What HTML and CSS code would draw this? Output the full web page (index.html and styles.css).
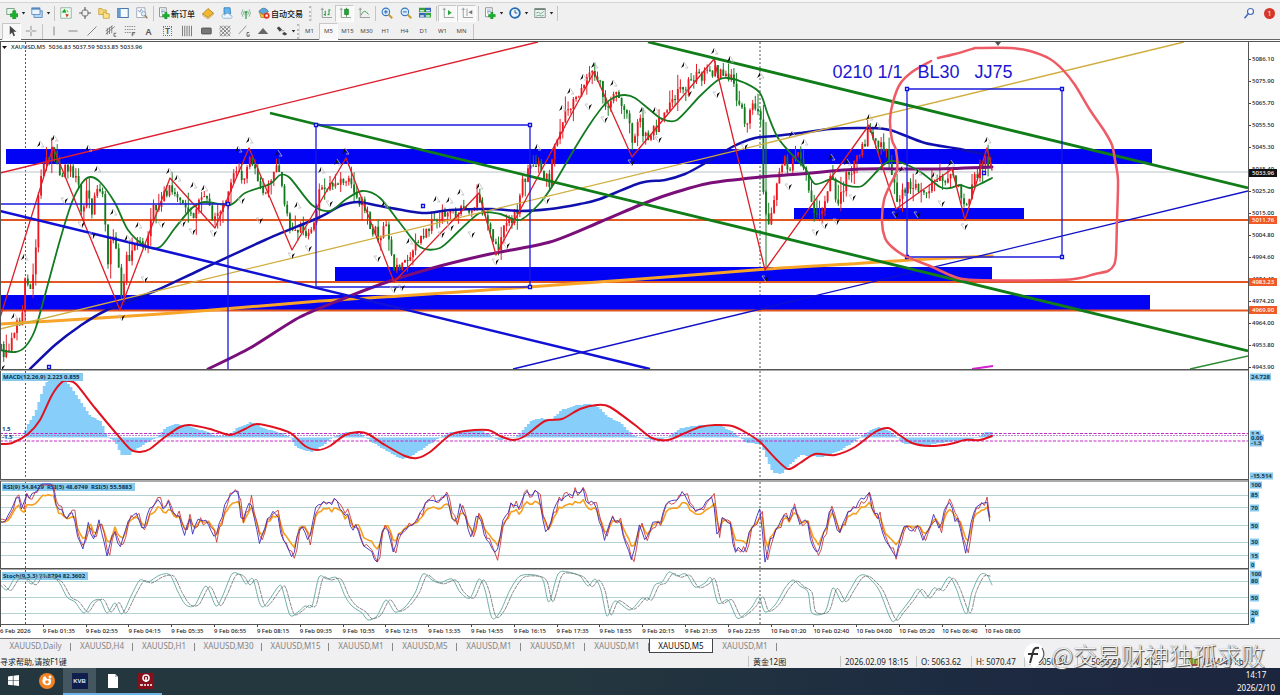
FILE: index.html
```html
<!DOCTYPE html>
<html lang="en">
<head>
<meta charset="utf-8">
<title>XAUUSD,M5</title>
<link rel="stylesheet" href="styles.css">
</head>
<body>
<svg class="sprite" aria-hidden="true">
  <symbol id="plus" viewBox="0 0 16 16"><path d="M1 2h10v8H1z" fill="#e8f5e8" stroke="#5a8f6a"/><path d="M9 5h4v4h3v4h-3v3H9v-3H6V9h3z" fill="#18b428" stroke="#0a7a18" stroke-width=".7"/></symbol>
  <symbol id="profiles" viewBox="0 0 16 16"><path d="M4 5h11v9H4z" fill="#b9d6f2" stroke="#4a7db5"/><path d="M1 1h11v9H1z" fill="#eaf4ff" stroke="#4a7db5"/><path d="M1 2.500h11" stroke="#4a7db5" stroke-width="2"/></symbol>
  <symbol id="market" viewBox="0 0 16 16"><path d="M1 1h14v14H1z" fill="#f3fbf3" stroke="#7aa889"/><path d="M3 7l3-4 2 4zM9 4l2 3" fill="#1ca52c" stroke="#1ca52c"/><path d="M7 9l5 1-3 4z" fill="#d9442c"/></symbol>
  <symbol id="target" viewBox="0 0 16 16"><circle cx="8" cy="8" r="4.500" fill="none" stroke="#777" stroke-width="1.300"/><path d="M8 0v5M8 11v5M0 8h5M11 8h5" stroke="#666" stroke-width="1.600"/></symbol>
  <symbol id="navigator" viewBox="0 0 16 16"><path d="M1 2h4l1 2h5v6H1z" fill="#f6d978" stroke="#c39524"/><path d="M7 7h3l1 2h4v6H7z" fill="#ffe48e" stroke="#c39524"/></symbol>
  <symbol id="terminal" viewBox="0 0 16 16"><path d="M1 2h14v12H1z" fill="#f5faff" stroke="#4b78ac" stroke-width="1.400"/><path d="M1 2h4v12H1z" fill="#6a9bd0"/></symbol>
  <symbol id="tester" viewBox="0 0 16 16"><path d="M1 1h11v13H1z" fill="#fff" stroke="#8796a8"/><path d="M3 4l2 3 2-4 2 3" fill="none" stroke="#5683b9"/><circle cx="10" cy="9" r="3" fill="#dceeff" stroke="#7990aa"/><path d="M12 11l3 4" stroke="#9b8347" stroke-width="2"/></symbol>
  <symbol id="order" viewBox="0 0 16 16"><path d="M2 1h9v12H2z" fill="#fff" stroke="#777"/><path d="M4 4h5M4 6h5M4 8h3" stroke="#6f93b5"/><path d="M9 7h3v3h3v3h-3v3H9v-3H6v-3h3z" fill="#17b62a" stroke="#0b7a19" stroke-width=".6"/></symbol>
  <symbol id="editor" viewBox="0 0 16 16"><path d="M1 9l7-7 7 6-7 6z" fill="#f2b82e" stroke="#ad7610"/><path d="M1 9v2l7 5 7-6V8l-7 6z" fill="#fff0b8" stroke="#ad7610" stroke-width=".8"/></symbol>
  <symbol id="cloud" viewBox="0 0 16 16"><path d="M4 1h8l1 8H4z" fill="#63b5ee" stroke="#2775b2"/><path d="M2 14c-3-5 3-5 3-3 2-5 7-2 7 0 4 0 3 4 1 4H3z" fill="#eaf5ff" stroke="#7da5c5"/></symbol>
  <symbol id="signal" viewBox="0 0 16 16"><path d="M4 3q-4 5 0 10M12 3q4 5 0 10M6 5q-3 3 0 6M10 5q3 3 0 6" fill="none" stroke="#8db69c" stroke-width="1.300"/><path d="M8 7v9" stroke="#38a74b" stroke-width="1.800"/><circle cx="8" cy="7" r="1.800" fill="#38a74b"/></symbol>
  <symbol id="auto" viewBox="0 0 16 16"><path d="M1 6q7-9 13 0l-6 5z" fill="#5da7dc" stroke="#33739e"/><path d="M2 7q6 6 10 0l-1 7H4z" fill="#f5c33d" stroke="#b07d18"/><circle cx="11.500" cy="11.500" r="4" fill="#e0301e"/><path d="M10 10h3v3h-3z" fill="#fff"/></symbol>
  <symbol id="bars" viewBox="0 0 16 16"><path d="M3 1v13h13M1 3h4" fill="none" stroke="#7d8a80"/><path d="M7 5v7M7 10h-2M12 3v8M12 4h2M10 10h2" stroke="#2c9b3d" stroke-width="1.400"/></symbol>
  <symbol id="candles" viewBox="0 0 16 16"><path d="M3 1v13h13M1 3h4" fill="none" stroke="#7d8a80"/><path d="M10 1v12" stroke="#168425"/><path d="M7.500 3h5v7h-5z" fill="#21a735" stroke="#168425"/></symbol>
  <symbol id="line" viewBox="0 0 16 16"><path d="M3 1v13h13M1 3h4" fill="none" stroke="#7d8a80"/><path d="M4 11q4-10 10-1" fill="none" stroke="#46a554" stroke-width="1.300"/></symbol>
  <symbol id="zoomin" viewBox="0 0 16 16"><circle cx="6.500" cy="6.500" r="5" fill="#d9ecff" stroke="#3978bb" stroke-width="1.400"/><path d="M4 6.500h5M6.500 4v5" stroke="#2465ac" stroke-width="1.300"/><path d="M10 10l5 5" stroke="#c59a35" stroke-width="2.500"/></symbol>
  <symbol id="zoomout" viewBox="0 0 16 16"><circle cx="6.500" cy="6.500" r="5" fill="#d9ecff" stroke="#3978bb" stroke-width="1.400"/><path d="M4 6.500h5" stroke="#2465ac" stroke-width="1.300"/><path d="M10 10l5 5" stroke="#c59a35" stroke-width="2.500"/></symbol>
  <symbol id="tile" viewBox="0 0 16 16"><path d="M0 1h8v6H0zM8 8h8v6H8z" fill="#35a33b"/><path d="M8 1h8v6H8zM0 8h8v6H0z" fill="#3866bd"/><path d="M1.500 4h5v2h-5zM9.500 4h5v2h-5zM1.500 11h5v2h-5zM9.500 11h5v2h-5z" fill="#ddf0e6"/></symbol>
  <symbol id="scroll" viewBox="0 0 16 16"><path d="M3 1v13h13M1 3h4" fill="none" stroke="#7d8a80"/><path d="M8 4l5 3.500L8 11z" fill="#2ba23b"/></symbol>
  <symbol id="shift" viewBox="0 0 16 16"><path d="M3 1v13h13M1 3h4M8 2v10" fill="none" stroke="#7d8a80"/><path d="M10 7l5-3v6z" fill="#777"/></symbol>
  <symbol id="clock" viewBox="0 0 16 16"><circle cx="8" cy="8" r="6.500" fill="#e8f4ff" stroke="#246bb5" stroke-width="2.400"/><path d="M8 4v4h3" fill="none" stroke="#355" stroke-width="1.200"/></symbol>
  <symbol id="template" viewBox="0 0 16 16"><path d="M1 2h14v12H1z" fill="#edf5ee" stroke="#71827a"/><path d="M1 3h14" stroke="#71827a" stroke-width="2"/><path d="M3 8l3-1 3 2 4-3M3 12l4-1 3 1 3-1" fill="none" stroke="#4f9275"/></symbol>
  <symbol id="search" viewBox="0 0 16 16"><circle cx="10" cy="6" r="4" fill="#fff" stroke="#4668bd" stroke-width="1.600"/><path d="M7 9l-5 6" stroke="#4668bd" stroke-width="2"/></symbol>
  <symbol id="cursor" viewBox="0 0 16 16"><path d="M5 1v12l3-3 2 5 2-1-2-5h4z" fill="#444"/></symbol>
  <symbol id="cross" viewBox="0 0 16 16"><path d="M8 1v6M8 9v6M1 8h6M9 8h6" stroke="#777"/></symbol>
  <symbol id="vline" viewBox="0 0 16 16"><path d="M8 2v12" stroke="#666"/></symbol>
  <symbol id="hline" viewBox="0 0 16 16"><path d="M2 8h12" stroke="#777" stroke-width="1.200"/></symbol>
  <symbol id="trend" viewBox="0 0 16 16"><path d="M2 14L14 2" stroke="#777" stroke-width="1.200"/></symbol>
  <symbol id="channel" viewBox="0 0 16 16"><path d="M1 12L13 2M1 8l9-7M3 4v9M6 3v9M9 1v10" stroke="#666"/><path d="M15 11h-3v4h3" fill="none" stroke="#444"/></symbol>
  <symbol id="fibo" viewBox="0 0 16 16"><path d="M1 2h14M1 6h14M1 10h8" stroke="#777" stroke-dasharray="2 1"/><path d="M11 15v-5h4M11 12h3" fill="none" stroke="#444"/></symbol>
  <symbol id="cycles" viewBox="0 0 16 16"><path d="M2 1v14M5 1v14M8 1v14M11 1v14M14 1v14" stroke="#555"/></symbol>
  <symbol id="rect" viewBox="0 0 16 16"><rect x="2" y="4" width="13" height="8" rx="1" fill="#777" stroke="#444"/></symbol>
  <symbol id="net" viewBox="0 0 16 16"><path d="M1 1l14 14M6 1l9 9M11 1l4 4M1 6l9 9M1 11l4 4M15 1L1 15M10 1L1 10M5 1L1 5M15 6l-9 9M15 11l-4 4" stroke="#666"/></symbol>
  <symbol id="gann" viewBox="0 0 16 16"><path d="M1 12L11 1" stroke="#777"/><path d="M15 10h-3v5h3v-2h-1" fill="none" stroke="#444"/></symbol>
  <symbol id="triangle" viewBox="0 0 16 16"><path d="M8 4l7 8H1z" fill="#666"/></symbol>
  <symbol id="arrows" viewBox="0 0 16 16"><path d="M1 4l3-2 4 4-3 3zM8 12l3-3 4 3-3 2z" fill="#444"/><path d="M7 8l4-1" stroke="#777"/></symbol>
</svg>

<header class="toolbars">
  <div class="bar bar-main">
    <button class="tool" aria-label="New chart"><svg><use href="#plus"/></svg></button><span class="caret"></span>
    <button class="tool" aria-label="Profiles"><svg><use href="#profiles"/></svg></button><span class="caret"></span>
    <span class="sep"></span>
    <button class="tool" aria-label="Market watch"><svg><use href="#market"/></svg></button>
    <button class="tool" aria-label="Data window"><svg><use href="#target"/></svg></button>
    <button class="tool" aria-label="Navigator"><svg><use href="#navigator"/></svg></button>
    <button class="tool" aria-label="Terminal"><svg><use href="#terminal"/></svg></button>
    <button class="tool" aria-label="Tester"><svg><use href="#tester"/></svg></button>
    <span class="sep"></span>
    <button class="tool labelled"><svg><use href="#order"/></svg>新订单</button>
    <button class="tool" aria-label="Editor"><svg><use href="#editor"/></svg></button>
    <button class="tool" aria-label="Hosting"><svg><use href="#cloud"/></svg></button>
    <button class="tool" aria-label="Signals"><svg><use href="#signal"/></svg></button>
    <button class="tool labelled"><svg><use href="#auto"/></svg>自动交易</button>
    <span class="sep grip"></span>
    <button class="tool" aria-label="Bar chart"><svg><use href="#bars"/></svg></button>
    <button class="tool on" aria-label="Candlesticks"><svg><use href="#candles"/></svg></button>
    <button class="tool" aria-label="Line chart"><svg><use href="#line"/></svg></button>
    <span class="sep"></span>
    <button class="tool" aria-label="Zoom in"><svg><use href="#zoomin"/></svg></button>
    <button class="tool" aria-label="Zoom out"><svg><use href="#zoomout"/></svg></button>
    <button class="tool" aria-label="Tile windows"><svg><use href="#tile"/></svg></button>
    <span class="sep"></span>
    <button class="tool on" aria-label="Auto scroll"><svg><use href="#scroll"/></svg></button>
    <button class="tool on" aria-label="Chart shift"><svg><use href="#shift"/></svg></button>
    <span class="sep"></span>
    <button class="tool" aria-label="Indicators"><svg><use href="#order"/></svg></button><span class="caret"></span>
    <button class="tool" aria-label="Periods"><svg><use href="#clock"/></svg></button><span class="caret"></span>
    <button class="tool" aria-label="Templates"><svg><use href="#template"/></svg></button><span class="caret"></span>
    <span class="sep"></span>
    <div class="bar-end">
      <button class="tool" aria-label="Search"><svg><use href="#search"/></svg></button>
      <button class="notice" aria-label="Messages">1</button>
    </div>
  </div>
  <div class="bar bar-draw">
    <button class="tool on" aria-label="Cursor"><svg><use href="#cursor"/></svg></button>
    <button class="tool" aria-label="Crosshair"><svg><use href="#cross"/></svg></button>
    <span class="sep"></span>
    <button class="tool" aria-label="Vertical line"><svg><use href="#vline"/></svg></button>
    <button class="tool" aria-label="Horizontal line"><svg><use href="#hline"/></svg></button>
    <button class="tool" aria-label="Trend line"><svg><use href="#trend"/></svg></button>
    <button class="tool" aria-label="Channel"><svg><use href="#channel"/></svg></button>
    <button class="tool" aria-label="Fibonacci"><svg><use href="#fibo"/></svg></button>
    <button class="tool glyph">A</button>
    <button class="tool glyph"><span class="boxed">T</span></button>
    <button class="tool" aria-label="Cycles"><svg><use href="#cycles"/></svg></button>
    <button class="tool" aria-label="Rectangle"><svg><use href="#rect"/></svg></button>
    <button class="tool" aria-label="Gann grid"><svg><use href="#net"/></svg></button>
    <button class="tool" aria-label="Gann line"><svg><use href="#gann"/></svg></button>
    <button class="tool" aria-label="Triangle"><svg><use href="#triangle"/></svg></button>
    <button class="tool" aria-label="Arrows"><svg><use href="#arrows"/></svg></button><span class="caret"></span>
    <span class="sep grip"></span>
    <button class="tool period">M1</button>
    <button class="tool period on">M5</button>
    <button class="tool period">M15</button>
    <button class="tool period">M30</button>
    <button class="tool period">H1</button>
    <button class="tool period">H4</button>
    <button class="tool period">D1</button>
    <button class="tool period">W1</button>
    <button class="tool period">MN</button>
    <span class="sep"></span>
  </div>
</header>

<main class="chart">
  <section class="pane">
    <svg class="plot" viewBox="0 41 1248 330" preserveAspectRatio="none">
      <path d="M25.500 42V369M760 42V369" class="day"/>
      <path d="M0 172H1248" stroke="#b9c3c9"/>
      <g class="zone"><path d="M6 149H1152V164H6zM794 208H1024V219H794zM335 267H992V281H335zM0 295H1150V310H0z"/></g>
      <path d="M0 220H1248M0 282H1248M0 310.500H1248" stroke="#e2571f" stroke-width="2"/>
      <path id="wick-up" stroke="#e0202a"/><path id="wick-down" stroke="#1b7d25"/>
      <path id="body-up" fill="#f0151f"/><path id="body-down" fill="#107a1c"/>
      <path d="M766 122V270" stroke="#1b7d25"/>
      <path id="ma-orange" class="curve" stroke="#f7a428" stroke-width="3"/>
      <path id="ma-purple" class="curve" stroke="#7a0f7a" stroke-width="3"/>
      <path id="ma-blue" class="curve" stroke="#1010ae" stroke-width="2.500"/>
      <path id="ma-green" class="curve" stroke="#137a20" stroke-width="1.800"/>
      <path d="M0 329L1184 42" stroke="#cfae3e" stroke-width="1.300"/>
      <path d="M0 173L538 42" stroke="#dd2030" stroke-width="1.400"/>
      <path id="zigzag" class="curve" stroke="#dc1f28" stroke-width="1.300"/>
      <path d="M0 211L650 369" stroke="#1111d6" stroke-width="2.600"/>
      <path d="M513 369L1248 191" stroke="#1111c8" stroke-width="1.300"/>
      <path d="M648 42L1248 188M270 113L1248 351" stroke="#107d18" stroke-width="2.800"/>
      <path d="M1190 369L1248 356" stroke="#2c8a34" stroke-width="1.300"/>
      <path d="M972 369L993 366" stroke="#d71fd0" stroke-width="2"/>
      <path d="M0 204H228V369M316 125H530V287H316zM907 89H1062V257H907z" fill="none" stroke="#1b1bdc" stroke-width="1.300"/>
      <path id="handles" fill="#fff" stroke="#1010dc" stroke-width="1.300"/>
      <path id="frac-dark" fill="#111"/><path id="frac-pale" fill="none" stroke="#bbb" stroke-width=".8"/>
      <path d="M995 42h6l-3 4z" fill="#555"/>
      <path id="sketch" class="curve" stroke="#ee5b65" stroke-width="2.500"/>
      <path d="M0 41.500H1248M.5 41V371M0 369.500H1248" stroke="#555"/><path d="M0 370.500H1248" stroke="#aaa"/>
    </svg>
    <p class="quote">XAUUSD,M5&nbsp; 5036.83 5037.59 5033.85 5033.96</p>
    <p class="note">0210 1/1   BL30   JJ75</p>
  </section>
  <aside class="axis prices">
    <span>5086.10</span><span>5075.90</span><span>5065.70</span><span>5055.50</span><span>5045.30</span><span>5035.40</span><span>5025.20</span><span>5015.00</span><span>5004.80</span><span>4994.60</span><span>4984.40</span><span>4974.20</span><span>4964.00</span><span>4953.80</span><span>4943.90</span>
    <b class="mark now" style="top:39.7%">5033.96</b><b class="mark" style="top:54.200%">5011.76</b><b class="mark" style="top:73%">4983.23</b><b class="mark" style="top:81.600%">4969.90</b>
  </aside>

  <section class="pane">
    <svg class="plot" viewBox="0 371 1248 110" preserveAspectRatio="none">
      <path id="macd-bars" fill="#87cefa"/>
      <path d="M0 433.500H1248M0 441H1248" stroke="#c42bc4" stroke-width="1.200" stroke-dasharray="3 1.500"/>
      <path d="M0 435.500H1248" stroke="#a96fc9" stroke-width=".8" stroke-dasharray="2 1"/>
      <path d="M25.500 371V480M760 371V480" class="day"/>
      <path id="macd-signal" class="curve" stroke="#e0121f" stroke-width="2"/>
      <path d="M.5 371V481M0 479.500H1248" stroke="#555"/><path d="M0 480.500H1248" stroke="#aaa"/>
    </svg>
    <p class="tag">MACD(12,26,9) 2.223 0.855</p>
    <p class="level"><span>1.5</span><span>-1.5</span></p>
  </section>
  <aside class="axis">
    <b class="val" style="top:5%">24.728</b><b class="val" style="top:57%">1.5</b><b class="val" style="top:65%">-1.5</b><b class="val" style="top:61%">0.00</b><b class="val" style="top:95%">-15.514</b>
  </aside>

  <section class="pane">
    <svg class="plot" viewBox="0 481 1248 89" preserveAspectRatio="none">
      <path d="M0 481.500H1248" stroke="#aaa"/>
      <path d="M0 495.500H1248M0 507.500H1248M0 525.500H1248M0 542.500H1248M0 555.500H1248" stroke="#b4d2d4"/>
      <path d="M25.500 482V568M760 482V568" class="day"/>
    </svg>
    <p class="tag">RSI(9) 54.8429&nbsp; RSI(5) 48.6749&nbsp; RSI(5) 55.5883</p>
    <svg class="plot over" viewBox="0 481 1248 89" preserveAspectRatio="none">
      <path id="rsi-orange" class="curve" stroke="#f5a11f" stroke-width="1.600"/>
      <path id="rsi-red" class="curve" stroke="#cf3838" stroke-width=".9"/>
      <path id="rsi-blue" class="curve" stroke="#3a2fc0" stroke-width=".9"/>
      <path d="M.5 481V570M0 568.500H1248" stroke="#555"/><path d="M0 569.500H1248" stroke="#aaa"/>
    </svg>
  </section>
  <aside class="axis">
    <b class="val" style="top:5%">100</b><b class="val" style="top:16%">85</b><b class="val" style="top:30%">70</b><b class="val" style="top:50%">50</b><b class="val" style="top:69%">30</b><b class="val" style="top:84%">15</b><b class="val" style="top:94%">0</b>
  </aside>

  <section class="pane">
    <svg class="plot" viewBox="0 570 1248 55" preserveAspectRatio="none">
      <path d="M0 581.500H1248M0 597.500H1248M0 613.500H1248" stroke="#b4d2d4"/>
      <path d="M25.500 570V624M760 570V624" class="day"/>
    </svg>
    <p class="tag">Stoch(9,3,3) 71.8794 82.3602</p>
    <svg class="plot over" viewBox="0 570 1248 55" preserveAspectRatio="none">
      <path id="stoch-main" class="curve" stroke="#6fb0a8"/>
      <path id="stoch-signal" class="curve" stroke="#777" stroke-width=".9" stroke-dasharray="3 1.500"/>
      <path d="M.5 570V625M0 624.500H1248" stroke="#555"/>
    </svg>
  </section>
  <aside class="axis">
    <b class="val" style="top:8%">100</b><b class="val" style="top:20%">80</b><b class="val" style="top:50%">50</b><b class="val" style="top:79%">20</b><b class="val" style="top:91%">0</b>
  </aside>

  <div class="times">
    <span>6 Feb 2026</span><span>9 Feb 01:35</span><span>9 Feb 02:55</span><span>9 Feb 04:15</span><span>9 Feb 05:35</span><span>9 Feb 06:55</span><span>9 Feb 08:15</span><span>9 Feb 09:35</span><span>9 Feb 10:55</span><span>9 Feb 12:15</span><span>9 Feb 13:35</span><span>9 Feb 14:55</span><span>9 Feb 16:15</span><span>9 Feb 17:35</span><span>9 Feb 18:55</span><span>9 Feb 20:15</span><span>9 Feb 21:35</span><span>9 Feb 22:55</span><span>10 Feb 01:20</span><span>10 Feb 02:40</span><span>10 Feb 04:00</span><span>10 Feb 05:20</span><span>10 Feb 06:40</span><span>10 Feb 08:00</span>
  </div>
</main>

<nav class="tabs">
  <button class="tab first">XAUUSD,Daily</button><button class="tab short">XAUUSD,H4</button><button class="tab short">XAUUSD,H1</button><button class="tab long">XAUUSD,M30</button><button class="tab long">XAUUSD,M15</button><button class="tab">XAUUSD,M1</button><button class="tab">XAUUSD,M5</button><button class="tab">XAUUSD,M1</button><button class="tab">XAUUSD,M1</button><button class="tab">XAUUSD,M1</button><button class="tab current">XAUUSD,M5</button><button class="tab">XAUUSD,M1</button>
</nav>

<footer class="status">
  <span class="help">寻求帮助,请按F1键</span>
  <span class="cell name">黄金12图</span>
  <span class="cell date">2026.02.09 18:15</span>
  <span class="cell open">O: 5063.62</span>
  <span class="cell">H: 5070.47</span>
  <span class="cell">L: 5050.36</span>
  <span class="cell">C: 5055.30</span>
  <span class="cell">V: 2627</span>
  <span class="cell net"><i class="meter"></i>1154/40 kb</span>
  <div class="watermark">
    <svg viewBox="0 0 24 26"><path d="M12 1a11.500 11.500 0 0 1 4 22l-4 3-3-3A11.500 11.500 0 0 1 12 1z" fill="#fff"/><path d="M17 6q-5-1-6 4L8 21M6 12h10" fill="none" stroke="#333" stroke-width="2"/><path d="M20 6q5 8-3 15" fill="none" stroke="#555" stroke-width="1.200"/></svg>
    <span>@交易财神独孤求败</span>
  </div>
</footer>

<div class="taskbar">
  <button class="task start" aria-label="Start"><svg viewBox="0 0 16 16"><path d="M0 2l7-1v6.500H0zM8 1l8-1v7.500H8zM0 8.500h7V15l-7-1zM8 8.500h8V16l-8-1z" fill="#fff"/></svg></button>
  <button class="task" aria-label="Browser"><svg viewBox="0 0 16 16"><circle cx="8" cy="8" r="8" fill="#f08324"/><path d="M4 5q1-3 3-1l1 2q5-1 4 3 0 4-5 3-5-1-3-7z" fill="#fff"/><circle cx="8" cy="9" r="1.800" fill="#f08324"/><circle cx="11" cy="4" r="1.500" fill="#fff"/></svg></button>
  <button class="task open focus"><span class="kvb">KVB</span></button>
  <button class="task open" aria-label="Document"><svg viewBox="0 0 16 16"><path d="M3 1h7l3 3v11H3z" fill="#fff"/><path d="M10 1v3h3" fill="#bbc5c9"/></svg></button>
  <button class="task open" aria-label="Trading"><svg viewBox="0 0 16 16"><path d="M0 0h16v16H0z" fill="#86101c"/><circle cx="8" cy="5" r="3" fill="none" stroke="#fff" stroke-width="1.500"/><path d="M8 4v5M2 12h3M6 12h2M9 12h2M12 12h2" stroke="#fff" stroke-width="1.600"/></svg></button>
  <div class="clock"><span>14:17</span><span>2026/2/10</span></div>
</div>
<script src="chart.js"></script>
</body>
</html>
```
FILE: styles.css
```css
* { box-sizing: border-box; }
body {
  margin: 0;
  height: 100vh;
  display: flex;
  flex-direction: column;
  overflow: hidden;
  background: #f0f0f0;
  color: #222;
  font-family: "Noto Sans", "Noto Sans CJK SC", sans-serif;
  font-size: 8px;
}
p { margin: 0; }
button { font: inherit; color: inherit; background: none; border: 0; padding: 0; margin: 0; }
.sprite { position: absolute; width: 0; height: 0; }

.toolbars {
  flex: none;
  height: 41px;
  padding-top: 4px;
  background: #f0f0f0;
  border-bottom: 1px solid #fff;
  box-shadow: inset 0 2px #f6f6f6, inset 0 3px #d4d4d4, inset 0 -1px #666;
}
.bar { display: flex; align-items: center; height: 18px; padding-left: 2px; }
.tool {
  flex: none;
  width: 19px;
  height: 17px;
  display: flex;
  align-items: center;
  justify-content: center;
  border: 1px solid transparent;
}
.tool svg { width: 12px; height: 12px; flex: none; }
.tool.on { background: #f8f8f8; border-color: #c8c8c8 #fff #fff #c8c8c8; }
.tool.labelled { width: auto; padding: 0 2px; gap: 1px; white-space: nowrap; font-family: "Noto Sans CJK SC", sans-serif; font-weight: 500; color: #111; }
.tool.glyph { font-size: 9px; font-weight: 600; color: #555; }
.boxed { border: 1px dotted #777; line-height: 8px; padding: 0 1px; }
.tool.period { font-size: 6px; color: #444; }
.caret { flex: none; width: 5px; height: 3px; margin-right: 1px; background: #222; clip-path: polygon(10% 0, 90% 0, 50% 100%); }
.sep { flex: none; width: 1px; height: 15px; margin: 0 1px 0 2px; background: #c4c4c4; }
.sep.grip { width: 3px; background: none; border-left: 2px dotted #bbb; border-right: 1px solid #ddd; }
.bar-main .grip { margin: 0 4px 0 3px; }
.bar-draw .grip { margin: 0; }
.bar-end { margin-left: auto; display: flex; align-items: center; gap: 6px; padding-right: 5px; }
.notice { width: 11px; height: 11px; border-radius: 50%; background: #d5372a; color: #fff; font-size: 7px; line-height: 11px; text-align: center; }

.chart {
  flex: 1;
  min-height: 0;
  display: grid;
  grid-template-columns: minmax(0, 1fr) 32px;
  grid-template-rows: minmax(0, 330fr) minmax(0, 110fr) minmax(0, 89fr) minmax(0, 55fr) 13px;
  background: #fff;
  font-size: 6px;
  font-weight: 500;
}
.pane { position: relative; min-width: 0; min-height: 0; }
.plot { display: block; width: 100%; height: 100%; }
.plot.over { position: absolute; inset: 0; }
.curve { fill: none; stroke-linejoin: round; stroke-linecap: round; }
.zone { fill: #0202f5; }
.day { stroke: #555; stroke-dasharray: 2 2; }
.quote { position: absolute; left: 11px; top: 2px; line-height: 9px; white-space: nowrap; color: #222; }
.quote::before { content: ""; position: absolute; left: -9px; top: 3px; width: 5px; height: 3px; background: #111; clip-path: polygon(0 0, 100% 0, 50% 100%); }
.note {
  position: absolute;
  left: 66.7%;
  top: 6%;
  white-space: pre;
  font: 18px/22px "Liberation Sans", sans-serif;
  color: #1d18d2;
}
.tag { position: absolute; left: 2px; top: 2px; padding: 0 3px 0 1px; line-height: 8px; background: #88c9ee; color: #0b3450; white-space: nowrap; font-weight: 700; }
.level { position: absolute; left: 2px; top: 54px; display: flex; flex-direction: column; line-height: 8px; color: #1d3f70; font-weight: 700; }

.axis { position: relative; min-height: 0; border-left: 1px solid #555; background: #fff; }
.prices { display: flex; flex-direction: column; padding-top: 6px; border-top: 1px solid #555; }
.prices span { flex: none; height: 22px; line-height: 22px; display: flex; align-items: center; gap: 1px; }
.prices span::before { content: ""; width: 2px; height: 1px; background: #444; }
.mark, .val { position: absolute; transform: translateY(-50%); line-height: 8px; }
.mark { left: 0; right: 3px; padding-left: 3px; background: #f05a28; color: #fff; font-weight: 500; }
.mark.now { background: #111; }
.val { left: 1px; padding: 0 1px; background: #88c9ee; color: #123a58; line-height: 7px; font-weight: 700; }

.times { grid-column: 1 / -1; display: flex; overflow: hidden; line-height: 12px; color: #222; }
.times span { flex: 0 0 3.345%; white-space: nowrap; position: relative; }
.times span::before { content: ""; position: absolute; left: 0; top: 0; width: 1px; height: 2px; background: #444; }

.tabs { flex: none; display: flex; height: 17px; align-items: flex-start; background: #f0eff2; border-top: 1px solid #777; color: #858585; }
.tab { width: 64px; height: 14px; position: relative; line-height: 14px; }
.tab::after { content: ""; position: absolute; right: 0; top: 4px; height: 8px; width: 1px; background: #888; }
.tab.first { width: 71px; }
.tab.short { width: 62px; }
.tab.long { width: 67px; }
.tab.current { background: #fff; color: #111; border: 1px solid #444; border-top: 0; }
.tab.current::after { display: none; }

.status { flex: none; position: relative; display: flex; align-items: center; height: 13px; background: #f0f0f0; white-space: nowrap; }
.help { flex: 1; overflow: hidden; }
.cell { flex: none; width: 53px; padding-left: 4px; border-left: 1px solid #c5c5c5; line-height: 11px; }
.name { width: 92px; }
.date { width: 76px; }
.open { width: 55px; }
.status .net { width: 97px; display: flex; align-items: center; gap: 2px; }
.meter { width: 12px; height: 8px; background: repeating-linear-gradient(90deg, #799a36 0 2px, #c7b655 2px 3px); border-bottom: 2px solid #a84c36; }
.watermark { position: absolute; right: 15px; bottom: -4px; display: flex; align-items: center; gap: 5px; font: 300 24px/34px "Noto Sans CJK SC", sans-serif; color: #f4f4f4; text-shadow: 1px 1px 1px #444, 0 0 1px #666; }
.watermark svg { width: 24px; height: 26px; }

.taskbar { flex: none; display: flex; align-items: stretch; height: 27px; background: linear-gradient(90deg, #24363e 45%, #1d2b41 75%, #1c253e); color: #fff; }
.task { width: 33px; display: flex; align-items: center; justify-content: center; border-bottom: 2px solid transparent; }
.task svg { width: 16px; height: 16px; }
.task.start { width: 30px; padding-right: 4px; }
.task.start svg { width: 11px; height: 11px; }
.task.open { border-color: #6bb3e4; }
.task.focus { background: #44565f; }
.kvb { width: 16px; height: 16px; background: #101e4e; font: bold 6px/16px "Liberation Sans", sans-serif; color: #dfe8ff; }
.clock { margin-left: auto; padding-right: 5px; display: flex; flex-direction: column; align-items: center; justify-content: space-around; line-height: 12px; }
```
FILE: chart.js
```javascript
// Each series is a flat list of x, y pairs in plot units.
const pairs = s => {
  const n = s.trim().split(/[\s,]+/).map(Number), out = [];
  for (let i = 0; i < n.length; i += 2) out.push([n[i], n[i + 1]]);
  return out;
};
const set = (id, d) => document.getElementById(id).setAttribute('d', d);
const poly = p => 'M' + p.map(a => a[0].toFixed(1) + ' ' + a[1].toFixed(1)).join('L');
// Catmull-Rom spline through every point.
const smooth = p => {
  let d = 'M' + p[0];
  for (let i = 0; i < p.length - 1; i++) {
    const a = p[i - 1] || p[i], b = p[i], c = p[i + 1], e = p[i + 2] || c;
    d += `C${b[0] + (c[0] - a[0]) / 7} ${b[1] + (c[1] - a[1]) / 7} ${c[0] - (e[0] - b[0]) / 7} ${c[1] - (e[1] - b[1]) / 7} ${c[0]} ${c[1]}`;
  }
  return d;
};
const at = (p, x) => {
  for (let i = 1; i < p.length; i++) {
    if (x <= p[i][0]) {
      const a = p[i - 1], b = p[i];
      return a[1] + (b[1] - a[1]) * (x - a[0]) / ((b[0] - a[0]) || 1);
    }
  }
  return p[p.length - 1][1];
};
let seed = 77;
const rnd = () => (seed = (seed * 16807) % 2147483647) / 2147483647;

set('zigzag', poly(pairs('0 318 53 147 120 310 170 178 215 228 249 148 292 250 346 158 394 282 479 193 496 255 594 72 632 157 714 59 765 270 869 125 896 209 952 169 965 220 987 148 992 170')));
set('ma-orange', smooth(pairs('0 324 100 318 200 311 320 301 400 296 500 289 640 279 767 269 850 264 910 260 992 256')));
set('ma-purple', smooth(pairs('208 369 250 348 300 317 345 298 390 281 440 266 490 254 550 242 600 222 640 205 670 194 710 183 760 177 800 174 860 169 930 169 992 167')));
set('ma-blue', smooth(pairs('30 369 55 345 80 326 105 311 155 291 200 270 265 240 320 217 340 206 358 202 380 206 422 213 450 210 490 209 520 211 550 209 580 204 600 199 640 183 665 180 685 174 702 165 732 147 755 138 775 136 800 133 830 129 865 128 890 130 925 143 960 149 992 156')));
set('ma-green', smooth(pairs('0 350 15 352 25 347 35 330 45 295 60 240 72 202 82 183 90 177 100 182 115 203 128 230 145 246 160 247 175 228 192 208 205 202 230 205 245 193 270 184 280 175 290 178 312 205 330 211 345 200 362 191 380 198 400 223 420 247 440 248 460 230 480 213 500 214 520 220 540 203 555 182 575 148 590 124 605 104 615 97 625 95 635 98 650 110 662 119 677 120 700 96 718 80 728 78 745 83 760 93 768 115 778 138 795 158 805 168 815 184 832 179 845 185 862 186 880 168 890 161 905 164 922 173 940 187 950 188 960 185 970 188 980 184 992 178')));
set('sketch', smooth(pairs('931 61 912 72 900 84 893 102 890 120 892 140 896 150 897 170 890 185 884 200 882 222 885 238 892 247 905 256 930 266 955 277 975 280 1060 280 1080 278 1095 274 1108 271 1114 265 1116 255 1117 220 1118 180 1115 160 1112 145 1105 132 1090 110 1075 85 1063 70 1050 59 1030 51 1010 48 975 48')) + smooth(pairs('975 48 955 54 938 58')));

const price = pairs('0 350 5 353 12 342 16 325 22 330 24 272 28 292 32 280 36 252 39 182 44 160 49 155 54 150 58 175 64 172 70 168 78 180 82 215 88 190 92 220 97 183 104 200 108 270 112 230 118 265 122 300 126 260 135 250 140 240 146 250 150 215 157 205 163 198 169 190 178 192 186 205 193 215 200 198 206 198 212 215 218 212 224 205 230 185 238 170 244 180 250 152 256 175 262 195 268 185 276 165 282 190 288 215 292 235 300 225 308 235 314 225 318 195 325 182 332 190 338 180 346 178 355 190 362 205 370 225 377 235 385 228 390 240 392 265 398 268 405 262 412 255 420 240 430 225 440 218 450 212 460 212 470 215 479 196 486 220 492 235 497 250 503 225 512 218 518 210 522 180 530 172 538 165 545 175 550 182 555 140 562 120 570 105 580 92 590 75 595 78 600 85 605 110 612 93 620 98 628 120 632 140 640 120 645 138 655 130 665 112 675 98 682 90 690 82 700 75 712 70 718 72 728 72 733 85 737 105 742 110 745 125 752 108 758 105 761 120 763 180 765 220 770 218 774 195 780 175 784 155 790 170 797 155 802 160 806 170 812 205 820 215 828 190 832 175 838 210 845 180 855 165 862 150 869 130 876 145 884 145 892 175 898 200 905 190 912 185 920 190 930 185 942 180 950 172 958 190 965 210 971 190 980 165 987 158 992 170');
let wu = '', wd = '', bu = '', bd = '', prev = 350;
for (let i = 0; i < 371; i++) {
  const x = 1 + i * 2.675, close = at(price, x) + (rnd() - 0.5) * 13, open = prev;
  const hi = Math.min(open, close) - rnd() * rnd() * 17, lo = Math.max(open, close) + rnd() * rnd() * 17;
  const body = `M${(x - 0.9).toFixed(1)} ${Math.min(open, close).toFixed(1)}h1.800v${Math.max(1, Math.abs(open - close)).toFixed(1)}h-1.800z`;
  const wick = `M${x.toFixed(1)} ${hi.toFixed(1)}V${lo.toFixed(1)}`;
  if (close < open) { wu += wick; bu += body; } else { wd += wick; bd += body; }
  prev = close;
}
set('wick-up', wu); set('wick-down', wd); set('body-up', bu); set('body-down', bd);

const ups = pairs('14 316 24 257 40 144 54 138 88 148 97 169 113 212 127 238 138 225 169 171 177 178 193 185 204 188 238 149 249 140 278 153 297 205 321 170 337 162 345 151 384 204 409 241 436 199 449 200 460 192 479 186 537 147 562 108 570 91 583 77 594 65 613 83 642 110 655 110 684 65 714 51 730 59 760 75 792 134 804 142 831 157 847 162 869 117 877 125 902 169 918 172 934 175 951 163 987 140');
const downs = pairs('2 367 65 200 82 224 93 235 122 317 145 279 162 224 183 223 193 231 214 233 242 200 260 220 292 255 309 248 330 203 378 258 394 289 402 287 442 234 451 227 472 234 496 261 507 245 547 200 589 106 605 119 632 162 659 139 689 93 717 94 745 146 766 278 789 186 816 232 825 225 837 221 853 197 896 214 918 214 942 203 965 226');
let dark = '', pale = '';
ups.forEach(([x, y]) => { dark += `M${x} ${y - 3}v4l-3 2z`; pale += `M${x} ${y - 3}l4 6h-3`; });
downs.forEach(([x, y]) => { dark += `M${x} ${y + 4}v-4l3-2z`; pale += `M${x} ${y + 4}l-4-6h3`; });
set('frac-dark', dark); set('frac-pale', pale);
set('handles', pairs('228 204 49 367 423 206 316 125 530 125 530 287 907 89 1062 89 907 257 1062 257 984 173').map(([x, y]) => `M${x - 1.5} ${y - 1.5}h3v3h-3z`).join(''));

const hist = pairs('0 437 22 437 25 427 33 415 38 400 43 385 48 378 62 378 70 388 80 403 88 415 100 422 106 437 113 440 120 455 128 455 135 449 150 440 156 437 165 427 175 424 188 426 205 432 215 436 228 436 235 428 250 422 262 428 280 433 288 437 296 448 310 452 322 445 330 438 345 432 360 434 368 440 380 448 400 459 412 455 430 443 440 437 450 432 480 430 490 436 497 440 512 438 520 432 530 421 540 418 550 420 560 410 575 405 590 404 600 409 605 416 620 423 630 434 640 438 650 440 665 438 680 428 700 425 720 426 735 434 745 443 760 444 766 460 772 473 780 474 790 463 800 455 820 457 840 450 855 440 866 432 877 427 890 432 896 438 902 444 925 445 945 442 965 440 978 437 985 432 992 432');
let bars = '';
for (let x = 0; x < 992; x += 2.675) {
  const y = Math.round(at(hist, x));
  bars += `M${x.toFixed(1)} 437.500V${y}h2.900V437.500z`;
}
set('macd-bars', bars);
set('macd-signal', smooth(pairs('0 444 12 443 28 434 40 420 52 395 62 382 68 381 76 384 95 408 115 432 130 449 140 452 150 449 165 437 180 427 190 425 210 429 230 435 245 429 257 424 280 429 292 434 305 446 318 450 330 446 345 435 358 432 368 434 385 445 405 456 417 458 430 452 450 435 465 431 488 430 500 436 513 440 525 436 545 421 562 419 580 409 597 405 610 407 635 425 652 438 668 440 685 433 700 427 715 425 732 426 745 432 760 442 775 458 788 469 800 463 815 454 835 455 855 447 875 432 888 428 898 434 912 443 930 446 950 444 965 440 980 440 992 436')));

const rsi = pairs('0 520 5 523 12 505 18 498 22 508 26 494 30 500 35 490 42 484 52 484 57 510 62 512 67 518 72 510 77 535 83 547 89 520 93 543 99 518 107 555 113 530 121 550 127 522 138 515 144 532 148 512 157 498 163 508 169 500 172 512 178 514 185 534 189 515 193 535 198 520 202 522 207 518 215 542 220 520 228 499 238 490 241 523 250 500 255 521 260 545 265 525 272 513 277 510 282 540 293 559 298 530 303 528 309 543 315 510 323 499 330 506 337 498 343 515 347 510 352 530 357 525 362 545 370 552 377 562 382 527 387 530 393 553 398 538 404 527 412 525 417 523 423 508 430 498 437 503 441 497 447 494 450 513 456 521 460 505 466 520 472 539 477 508 483 530 488 543 496 555 502 525 508 512 513 502 518 510 523 495 538 492 546 535 553 515 557 500 570 495 583 491 588 505 593 497 599 520 605 541 612 518 620 522 625 540 631 560 640 523 645 542 655 520 660 527 665 505 675 500 684 490 688 504 695 510 705 505 713 493 717 535 722 520 730 525 735 552 740 548 745 556 750 530 755 525 760 505 765 562 770 540 778 530 783 515 788 520 794 508 800 525 807 521 812 545 817 553 825 530 831 508 838 535 847 513 855 510 860 500 865 497 869 492 874 515 878 510 883 536 890 545 896 555 903 530 907 523 912 532 918 528 923 540 930 525 934 515 940 530 946 505 952 504 955 520 958 515 966 555 972 515 979 503 985 500 987 503 989 520 992 522');
const blue = [], red = [], orange = [];
for (let x = 0; x <= 992; x += 2.675) {
  const y = at(rsi, x), n = (rnd() - 0.5) * 6, back = at(rsi, Math.max(0, x - 1.5));
  blue.push([x, Math.max(484, y + n)]);
  red.push([x, Math.max(485, Math.min(562, 523 + (back - 523) * 1.03 + n + (rnd() - 0.5) * 8))]);
  orange.push([x, 523 + (back - 523) * 0.68 + n * 0.6]);
}
set('rsi-blue', poly(blue)); set('rsi-red', poly(red)); set('rsi-orange', poly(orange));

const stoch = pairs('0 584 7 590 15 578 24 578 32 584 40 575 57 580 67 597 75 602 84 613 92 602 100 600 107 613 115 603 122 614 132 594 140 580 148 582 160 575 170 575 178 592 186 605 195 605 206 586 216 606 223 595 232 574 240 575 246 584 253 579 262 607 278 587 282 588 290 615 298 612 305 606 312 606 319 577 327 579 337 578 345 596 352 606 362 613 368 620 377 616 386 600 395 612 405 607 415 593 423 574 432 580 440 583 452 579 460 592 470 598 479 579 485 590 492 618 500 612 510 590 520 576 535 575 543 580 549 602 558 574 568 572 580 576 588 586 595 579 601 590 607 616 615 601 630 610 642 598 648 600 655 585 662 582 669 572 677 576 686 574 695 587 705 583 711 578 718 603 728 600 737 618 745 614 752 607 759 597 765 612 775 605 785 588 793 580 800 586 808 592 812 613 825 612 833 588 842 602 850 590 858 577 865 575 873 582 880 592 892 621 900 613 910 600 918 589 926 598 934 588 940 590 949 577 956 588 966 614 972 592 980 575 987 575 992 585');
set('stoch-main', smooth(stoch));
set('stoch-signal', smooth(stoch.filter(a => a[0] < 990).map(([x, y]) => [x + 4, y * 0.94 + 597 * 0.06])));
```
